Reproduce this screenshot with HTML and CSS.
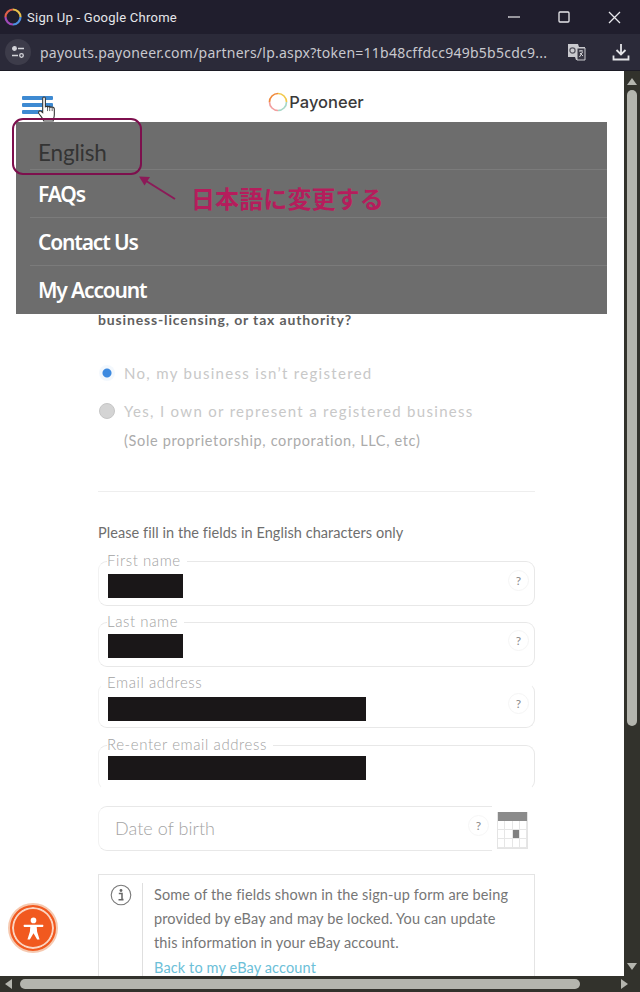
FILE: index.html
```html
<!DOCTYPE html>
<html lang="en">
<head>
<meta charset="utf-8">
<title>Sign Up - Google Chrome</title>
<link rel="stylesheet" href="styles.css">
</head>
<body>
<header class="titlebar">
  <svg class="chrome-ring" width="18" height="18" viewBox="0 0 18 18" fill="none" stroke-width="2.2"><path d="M9 1.5A7.5 7.5 0 0 1 16.5 9" stroke="#e8c04a"/><path d="M16.5 9A7.5 7.5 0 0 1 9 16.5" stroke="#4d8fe0"/><path d="M9 16.5A7.5 7.5 0 0 1 1.5 9" stroke="#a04ab8"/><path d="M1.5 9A7.5 7.5 0 0 1 9 1.5" stroke="#e0604a"/></svg>
  <span class="window-title">Sign Up - Google Chrome</span>
  <div class="window-controls">
    <svg width="12" height="12" viewBox="0 0 12 12"><path d="M0 6h12" stroke="#d8d8dc" stroke-width="1.3"/></svg>
    <svg width="12" height="12" viewBox="0 0 12 12" fill="none"><rect x="1" y="1" width="10" height="10" rx="1" stroke="#e8e8ec" stroke-width="1.3"/></svg>
    <svg width="13" height="13" viewBox="0 0 13 13"><path d="M1 1l11 11M12 1L1 12" stroke="#e8e8ec" stroke-width="1.3"/></svg>
  </div>
</header>
<div class="addressbar">
  <span class="site-info">
    <svg width="14" height="14" viewBox="0 0 14 14" fill="none" stroke="#d5d5da" stroke-width="1.3"><circle cx="3.5" cy="3.5" r="1.8" fill="#d5d5da"/><path d="M7 3.5h6M1 10.5h6"/><circle cx="10.5" cy="10.5" r="1.8"/></svg>
  </span>
  <span class="url">payouts.payoneer.com/partners/lp.aspx?token=11b48cffdcc949b5b5cdc9...</span>
  <svg class="translate-icon" width="19" height="18" viewBox="0 0 19 18"><path d="M1 1h10l1 3h6v13h-9l-1-3H1z" fill="#c9c9ce"/><path d="M10 5h8v12h-8z" fill="#3a3946" stroke="#c9c9ce"/><path d="M12 8h4M14 7v1M12.5 14l3-5M13 10l3 3" stroke="#d8d8dc" fill="none"/><circle cx="5.5" cy="7.5" r="2.6" fill="none" stroke="#55545f" stroke-width="1.2"/></svg>
  <svg class="download-icon" width="18" height="18" viewBox="0 0 18 18" fill="none" stroke="#e4e4e8" stroke-width="1.8"><path d="M9 1v10M4.5 7L9 11.5 13.500 7M1.500 12.500V16.500H16.500V12.500"/></svg>
</div>
<div class="viewport">
  <main class="page">
    <div class="page-header">
      <div class="hamburger"><span></span><span></span><span></span></div>
      <div class="logo">
        <svg width="20" height="20" viewBox="0 0 20 20" fill="none" stroke-width="1.7"><path d="M10 1.500A8.500 8.500 0 0 1 18.500 10" stroke="#f2c94c"/><path d="M18.500 10A8.500 8.500 0 0 1 10 18.500" stroke="#a8d8c8"/><path d="M10 18.500A8.500 8.500 0 0 1 1.500 10" stroke="#f2a0a0"/><path d="M1.500 10A8.500 8.500 0 0 1 10 1.500" stroke="#f08a3c"/></svg>
        <span>Payoneer</span>
      </div>
      <span></span>
    </div>

    <form class="form">
      <p class="question">business-licensing, or tax authority?</p>
      <div class="radio-row">
        <span class="radio radio-on"></span>
        <span class="radio-label">No, my business isn’t registered</span>
      </div>
      <div class="radio-row radio-row-second">
        <span class="radio radio-off"></span>
        <span class="radio-label">Yes, I own or represent a registered business</span>
      </div>
      <p class="radio-note">(Sole proprietorship, corporation, LLC, etc)</p>
      <hr class="rule">
      <p class="hint">Please fill in the fields in English characters only</p>

      <div class="fields">
        <fieldset class="field">
          <legend>First name</legend>
          <div class="field-body"><span class="redact redact-short"></span><span class="help">?</span></div>
        </fieldset>
        <fieldset class="field field-last">
          <legend>Last name</legend>
          <div class="field-body"><span class="redact redact-short"></span><span class="help">?</span></div>
        </fieldset>
        <fieldset class="field field-email">
          <legend>Email address</legend>
          <div class="field-body"><span class="redact redact-long"></span><span class="help">?</span></div>
        </fieldset>
        <fieldset class="field field-reenter">
          <legend>Re-enter email address</legend>
          <div class="field-body"><span class="redact redact-long"></span></div>
        </fieldset>
      </div>

      <div class="dob-row">
        <div class="dob">
          <span class="dob-label">Date of birth</span>
          <span class="help help-dob">?</span>
        </div>
        <div class="calendar">
          <div class="cal-head"></div>
          <div class="cal-grid">
            <i></i><i></i><i></i><i></i>
            <i></i><i></i><i class="cal-on"></i><i></i>
            <i></i><i></i><i></i><i></i>
          </div>
        </div>
      </div>

      <div class="notice">
        <div class="notice-icon">
          <svg width="22" height="22" viewBox="0 0 22 22" fill="none"><circle cx="11" cy="11" r="9.800" stroke="#777" stroke-width="1.100"/><circle cx="11" cy="6.500" r="1.400" fill="#666"/><path d="M8.800 9.500H12V15.500H13.500M8.500 15.800H13.500" stroke="#666" stroke-width="1.500"/></svg>
        </div>
        <div class="notice-text">
          <p>Some of the fields shown in the sign-up form are being provided by eBay and may be locked. You can update this information in your eBay account.</p>
          <a class="notice-link" href="#">Back to my eBay account</a>
        </div>
      </div>
    </form>

    <nav class="menu">
      <a class="menu-item menu-english" href="#">English</a>
      <a class="menu-item" href="#">FAQs</a>
      <a class="menu-item" href="#">Contact Us</a>
      <a class="menu-item" href="#">My Account</a>
    </nav>

    <svg class="cursor" width="20" height="28" viewBox="0 0 18 26" fill="#fff" stroke="#333" stroke-width="1"><path d="M5 2.500c0-2 2.500-2 2.500 0V10l2-.5 0 .5 2-.3.300.6 2-.1c1.500 0 2 1 2 2v5c0 3-1 4-1 6H6c-.5-2-2-3.500-4.500-7-1-1.500.5-3 2-2L5 15.500z"/><path d="M9.500 10v4M11.500 10v4M13.800 10.500V14" fill="none" stroke-width=".7"/></svg>
    <div class="highlight"></div>
    <svg class="arrow" width="40" height="26" viewBox="0 0 40 26" fill="none"><path d="M37 24L5 4" stroke="#8c1a58" stroke-width="2"/><path d="M1 1.500l11 .5-5.500 8.500z" fill="#8c1a58"/></svg>
    <span class="annotation">日本語に変更する</span>

    <button class="a11y" type="button" aria-label="Accessibility">
      <svg width="21" height="25" viewBox="0 0 26 30" fill="#fff"><circle cx="13" cy="5" r="3.500"/><path d="M1.500 10.500h23c1 0 1 2.500 0 2.500H17l.5 6 3 9.500h-3L13 21l-4.500 7.500h-3l3-9.500.5-6H1.500c-1 0-1-2.500 0-2.500z"/></svg>
    </button>
  </main>
  <aside class="vscroll">
    <span class="tri tri-up"></span>
    <span class="vthumb"></span>
    <span class="tri tri-down"></span>
  </aside>
</div>
<div class="hscroll">
  <span class="tri tri-left"></span>
  <span class="hthumb"></span>
  <span class="tri tri-right"></span>
</div>
</body>
</html>
```
FILE: styles.css
```css
* { box-sizing: border-box; }
html, body { margin: 0; height: 100%; }
body {
  width: 640px;
  height: 992px;
  overflow: hidden;
  display: flex;
  flex-direction: column;
  background: #fff;
  font-family: Lato, "Liberation Sans", sans-serif;
}

/* Browser chrome */
.titlebar {
  height: 34px;
  flex: none;
  display: flex;
  align-items: center;
  padding-left: 4px;
  background: #201e2d;
}
.window-title {
  margin-left: 5px;
  font: 400 13px Roboto, sans-serif;
  letter-spacing: 0.25px;
  color: #e6e6ea;
}
.window-controls {
  margin-left: auto;
  display: flex;
  align-items: center;
  gap: 38px;
  padding-right: 19px;
}
.addressbar {
  height: 37px;
  flex: none;
  display: flex;
  align-items: center;
  padding: 0 10px 0 5px;
  background: #2b2a39;
  border-bottom: 1px solid #1c1b25;
}
.site-info {
  width: 26px;
  height: 26px;
  flex: none;
  display: flex;
  align-items: center;
  justify-content: center;
  border-radius: 50%;
  background: #3d3c4a;
}
.url {
  margin-left: 9px;
  font: 14px "Noto Sans", sans-serif;
  letter-spacing: 0.24px;
  color: #c8c8ce;
  white-space: nowrap;
}
.translate-icon { margin-left: auto; margin-right: 26px; }

/* Viewport */
.viewport {
  flex: 1;
  min-height: 0;
  display: flex;
}
.page {
  position: relative;
  flex: 1;
  min-width: 0;
  overflow: hidden;
  background: #fff;
}
.page-header {
  height: 50px;
  display: grid;
  grid-template-columns: 1fr auto 1fr;
  align-items: center;
  padding: 12px 14px 0 22px;
}
.hamburger {
  width: 31px;
  display: flex;
  flex-direction: column;
  gap: 3px;
  margin-top: 6px;
}
.hamburger span { height: 4px; background: #3e8ad2; border-radius: 1px; }
.logo {
  display: flex;
  align-items: center;
  gap: 1px;
  font: 500 16.500px Inter, "Noto Sans", sans-serif;
  color: #3a3a3a;
}

/* Form */
.form {
  width: 437px;
  margin-left: 98px;
  padding-top: 189px;
}
.question {
  margin: 0;
  font-size: 14px;
  font-weight: 700;
  line-height: 20px;
  letter-spacing: 0.85px;
  color: #5f5f5f;
}
.radio-row {
  display: flex;
  align-items: center;
  height: 24px;
  margin-top: 31px;
}
.radio-row-second { margin-top: 14px; }
.radio {
  width: 16px;
  height: 16px;
  flex: none;
  margin-left: 1px;
  margin-right: 9px;
  border-radius: 50%;
}
.radio-on {
  background: radial-gradient(circle, #3d8ae0 0 4px, #f3f8fd 5px);
}
.radio-off {
  background: #d4d4d4;
  border: 1px solid #c6c6c6;
}
.radio-label {
  font-size: 15px;
  letter-spacing: 1.310px;
  color: #c8c8c8;
}
.radio-note {
  margin: 8px 0 0 26px;
  font-size: 14.500px;
  line-height: 20px;
  letter-spacing: 0.660px;
  color: #ababab;
}
.rule {
  margin: 40px 0 0;
  border: 0;
  border-top: 1px solid #eeeeee;
}
.hint {
  margin: 31px 0 0;
  font-size: 14.500px;
  line-height: 20px;
  letter-spacing: 0.060px;
  color: #6e6e6e;
}

/* Fields */
.fields {
  display: flex;
  flex-direction: column;
  gap: 8px;
  margin-top: 10px;
}
.field {
  height: 53px;
  margin: 0;
  padding: 0 0 0 9px;
  border: 1px solid #e8e8e8;
  border-left-color: #f2f2f2;
  border-radius: 9px;
}
.field legend {
  height: 16px;
  padding: 0 6px 0 0;
  margin-left: -1px;
  font-size: 15px;
  font-weight: 300;
  line-height: 14px;
  letter-spacing: 0.580px;
  color: #a2a2a2;
}
.field-email { border-top-color: transparent; }
.field-reenter { margin-top: 1px; border-bottom-color: transparent; }
.field-body {
  display: flex;
  align-items: center;
  justify-content: space-between;
  height: 33px;
  padding-right: 5px;
}
.field-last .field-body { height: 31px; }
.field-email .field-body { height: 35px; }
.field-reenter .field-body { height: 29px; }
.redact {
  display: block;
  height: 24px;
  background: #1a1718;
}
.redact-short { width: 75px; }
.redact-long { width: 258px; }
.help {
  width: 21px;
  height: 21px;
  margin-bottom: 11px;
  display: flex;
  align-items: center;
  justify-content: center;
  border: 1px solid #f5f5f5;
  border-radius: 50%;
  font-size: 12px;
  color: #8a8a8a;
}

/* Date of birth */
.dob-row {
  display: flex;
  align-items: flex-start;
  gap: 5px;
  margin-top: 16px;
}
.dob {
  width: 394px;
  height: 45px;
  display: flex;
  align-items: center;
  justify-content: space-between;
  padding: 0 3px 0 16px;
  border: 1px solid #e8e8e8;
  border-right: 0;
  border-left-color: #f2f2f2;
  border-radius: 9px 0 0 9px;
}
.dob-label {
  margin-bottom: 2px;
  font-size: 18px;
  font-weight: 300;
  letter-spacing: 0.050px;
  color: #a4a4a4;
}
.help-dob { border-color: #f6f6f6; margin-bottom: 6px; }
.calendar {
  width: 31px;
  margin-top: 6px;
  border: 1px solid #e4e4e4;
  border-top: 0;
}
.cal-head { height: 9px; background: #8b8b8b; }
.cal-grid {
  display: grid;
  grid-template-columns: repeat(4, 1fr);
  grid-auto-rows: 9px;
}
.cal-grid i { border-right: 1px solid #e6e6e6; border-bottom: 1px solid #e6e6e6; }
.cal-grid .cal-on { background: #808080; }

/* Notice */
.notice {
  display: flex;
  height: 130px;
  margin-top: 23px;
  padding-top: 8px;
  border: 1px solid #e4e4e4;
}
.notice-icon {
  width: 44px;
  height: 100%;
  flex: none;
  padding: 1px 0 0 11px;
  border-right: 1px solid #dfdfdf;
}
.notice-text {
  padding-left: 11px;
  font-size: 14.500px;
  line-height: 24px;
  letter-spacing: 0.130px;
  color: #767676;
}
.notice-text p { margin: 0; width: 358px; }
.notice-link { display: block; margin-top: 1px; color: #6cc0d8; text-decoration: none; }

/* Overlaid menu */
.menu {
  position: absolute;
  left: 16px;
  top: 51px;
  width: 591px;
  height: 192px;
  display: grid;
  grid-template-rows: 47px 48px 48px 49px;
  background: #6d6d6d;
}
.menu-item {
  display: flex;
  align-items: center;
  margin-left: 14px;
  padding-left: 8px;
  border-top: 1px solid #7b7b7b;
  font: 600 21px "Noto Sans", sans-serif;
  letter-spacing: -1.150px;
  color: #fff;
  text-decoration: none;
}
.menu-english {
  border-top: 0;
  padding-top: 14px;
  font: 400 22.500px Lato, sans-serif;
  letter-spacing: -0.170px;
  color: #343434;
}

/* Overlays on the screenshot */
.cursor { position: absolute; left: 37px; top: 25px; }
.highlight {
  position: absolute;
  left: 12px;
  top: 47px;
  width: 130px;
  height: 57px;
  border: 2px solid #7d0f4d;
  border-radius: 11px;
}
.arrow { position: absolute; left: 138px; top: 104px; }
.annotation {
  position: absolute;
  left: 191px;
  top: 109px;
  font: 700 24px "Noto Sans CJK JP", sans-serif;
  line-height: 36px;
  letter-spacing: 0.100px;
  color: #b51d5c;
  white-space: nowrap;
}
.a11y {
  position: absolute;
  left: 9px;
  top: 833px;
  width: 48px;
  height: 48px;
  padding: 0;
  display: flex;
  align-items: center;
  justify-content: center;
  border: 3px solid #f1591f;
  border-radius: 50%;
  outline: 2px solid #f6c9b0;
  outline-offset: -1px;
  background: #f1591f;
  box-shadow: inset 0 0 0 2px #fbd5c2;
}

/* Scrollbars */
.vscroll {
  width: 16px;
  flex: none;
  display: flex;
  flex-direction: column;
  align-items: center;
  padding: 7px 0 6px;
  background: #32322c;
}
.vthumb {
  width: 10px;
  height: 636px;
  margin-top: 5px;
  border-radius: 5px;
  background: #b4b5ae;
}
.tri { display: block; width: 0; height: 0; }
.tri-up {
  border: 5px solid transparent;
  border-top: 0;
  border-bottom: 7px solid #b4b5ae;
}
.tri-down {
  margin-top: auto;
  border: 5px solid transparent;
  border-bottom: 0;
  border-top: 7px solid #b4b5ae;
}
.hscroll {
  height: 16px;
  flex: none;
  display: flex;
  align-items: center;
  padding: 0 12px 0 5px;
  background: #32322c;
}
.hthumb {
  width: 560px;
  height: 10px;
  margin-left: 8px;
  border-radius: 5px;
  background: #b4b5ae;
}
.tri-left {
  border: 5px solid transparent;
  border-left: 0;
  border-right: 7px solid #b4b5ae;
}
.tri-right {
  margin-left: auto;
  border: 5px solid transparent;
  border-right: 0;
  border-left: 7px solid #b4b5ae;
}
```
